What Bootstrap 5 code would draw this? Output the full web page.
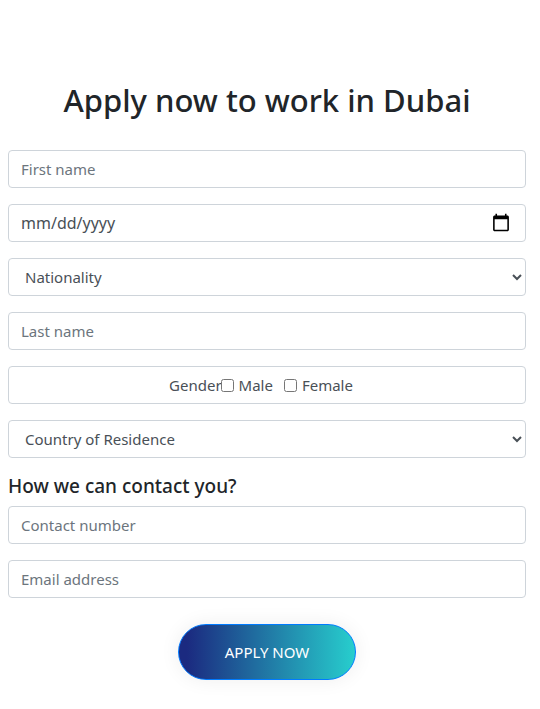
<!DOCTYPE html>
<html lang="en">
<head>
<meta charset="utf-8">
<meta name="viewport" content="width=device-width, initial-scale=1">
<title>Apply now to work in Dubai</title>
<link href="https://cdn.jsdelivr.net/npm/bootstrap@5.3.0/dist/css/bootstrap.min.css" rel="stylesheet">
<style>
body { font-family: "Noto Sans", "Open Sans", sans-serif; font-size: 15px; }
.apply-page { padding: 81px 14px 28px 8px; }
.apply-title { font-size: 31px; line-height: 38px; margin-bottom: 31px; }
.contact-title { font-size: 19px; line-height: 25px; margin: 0 0 -9px; }
.form-control { height: 38px; font-size: 15px; line-height: 24px; padding: 6px 12px; border-color: #ced4da; border-radius: 4px; color: #495057; }
.form-control::placeholder { color: #6c757d; }
input[type="date"].form-control { font-size: 16px; }
input[type="date"]::-webkit-calendar-picker-indicator { width: 20px; height: 20px; }
select.form-control { appearance: auto; }
.gender-box input { width: 13px; height: 13px; margin: 0 1px 0 -1px; }
.gender-box label:last-child { margin-right: 12px; }
.btn-apply { width: 178px; height: 56px; margin-top: 10px; font-size: 15px; color: #fff; border: 1px solid #007bff; background: linear-gradient(to right, #1b2a80 5%, #27cfce) border-box; box-shadow: 0 0 20px #eee; }
.btn-apply:hover { color: #fff; border-color: #007bff; }
</style>
</head>
<body>
<main class="apply-page">
  <h1 class="apply-title text-center fw-medium">Apply now to work in Dubai</h1>
  <form class="d-flex flex-column gap-3">
    <input type="text" class="form-control" placeholder="First name" aria-label="First name">
    <input type="date" class="form-control" aria-label="Date of birth">
    <select class="form-control" aria-label="Nationality"><option>Nationality</option></select>
    <input type="text" class="form-control" placeholder="Last name" aria-label="Last name">
    <div class="form-control gender-box d-flex justify-content-center align-items-center" role="group" aria-labelledby="gender">
      <span id="gender">Gender</span>
      <input type="checkbox" id="male"><label for="male" class="ms-1 me-2 pe-1">Male</label>
      <input type="checkbox" id="female"><label for="female" class="ms-1">Female</label>
    </div>
    <select class="form-control" aria-label="Country of Residence"><option>Country of Residence</option></select>
    <h2 class="contact-title fw-medium">How we can contact you?</h2>
    <input type="tel" class="form-control" placeholder="Contact number" aria-label="Contact number">
    <input type="email" class="form-control" placeholder="Email address" aria-label="Email address">
    <button type="submit" class="btn btn-apply rounded-pill align-self-center">APPLY NOW</button>
  </form>
</main>
<script src="https://cdn.jsdelivr.net/npm/bootstrap@5.3.0/dist/js/bootstrap.bundle.min.js"></script>
</body>
</html>
